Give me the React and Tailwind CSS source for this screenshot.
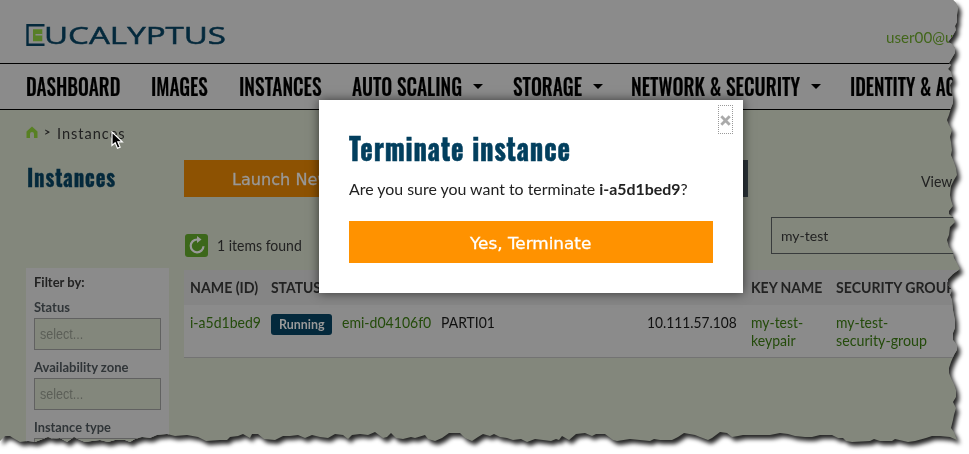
import { useLayoutEffect, useRef, useState } from "react";

const OSWALD = "font-['Oswald','Roboto',sans-serif]";

// Squeezes or stretches a line of text so that it fills the width of its box.
function Fit({ className = "", children }) {
  const box = useRef(null);
  const line = useRef(null);
  const [scale, setScale] = useState(1);
  useLayoutEffect(() => {
    setScale(box.current.clientWidth / line.current.offsetWidth);
  }, []);
  return (
    <span ref={box} className={`block shrink-0 text-left whitespace-nowrap ${className}`}>
      <span ref={line} className="inline-block origin-left align-top" style={{ transform: `scaleX(${scale})` }}>
        {children}
      </span>
    </span>
  );
}

// Outline of the torn page: right edge downwards, then bottom edge leftwards.
const TORN = [
  "0,0 953,0 956,3 958,8 957,15 957,22 955,26 956,30 952,37 948,42 952,44 955,48 955,53 952,58 949,63 951,65 948,69 951,72 953,80 950,85 951,92 953,97 953,103 951,108 949,115 947,120 949,125 952,130 950,137 951,142 952,150",
  "951,155 954,162 956,168 957,175 954,180 951,186 950,195 951,200 953,206 949,211 949,214 953,217 955,222 950,227 949,235 947,240 949,247 953,252 954,258 957,263 960,269 953,274 948,279 948,285 952,290 950,295 952,300",
  "953,310 955,320 955,328 953,333 953,340 957,345 957,350 954,355 951,362 949,368 949,373 951,378 954,384 956,390 956,397 953,402 956,408 954,415 953,420 951,428 954,432 957,440",
  "950,437 940,436 932,436 926,438 915,441 908,442 895,439 892,441 880,441 874,439 870,441 852,442 846,441 843,438 838,438 832,435 820,435 812,437 805,437 795,436 788,434 780,433 770,435 755,435 743,435 738,436 732,437 727,433 720,432 712,438 708,440 700,437 695,435 684,433 678,437 672,440 660,440 654,439 650,441",
  "640,440 630,439 617,441 613,440 605,434 596,434 592,436 585,433 576,434 569,440 562,436 559,440 556,439 551,441 543,440 535,439 527,442 521,439 513,440 507,438 500,437 494,434 490,436 483,434 478,437 472,441 465,438 460,433 449,433 442,438 435,441 428,439 425,435 415,438 411,437 403,439 396,438 391,433 387,437 383,438 375,432 368,435 360,434 352,435 348,439 343,435 335,434 328,438 320,437",
  "312,435 305,438 298,435 290,436 283,436 275,440 264,439 258,434 252,434 250,438 243,434 238,436 230,437 227,440 220,440 206,441 198,437 187,435 175,436 167,434 157,435 150,438 142,437 135,439 130,442 125,440 115,440 108,442 100,440 92,441 85,442 80,440 74,437 67,442 60,438 53,439 48,437 35,442 28,441 20,442 13,438 10,436 5,436 0,441",
].join(" ");
const CLIP = `polygon(${TORN.split(" ").map((p) => p.split(",").map((n) => n + "px").join(" ")).join(",")})`;

function Logo() {
  return (
    <svg width="201" height="40" viewBox="0 0 201 40" className="block">
      <path d="M18.500 9.200H1.500V28.800H18.500" fill="none" stroke="#04293c" strokeWidth="2.400" />
      <path d="M7 13.300h9.300v12H7z" fill="#587f27" />
      <path d="M9.500 18.700h7" stroke="#8b8b8b" strokeWidth="1.500" />
      <text x="18" y="28" textLength="182" lengthAdjust="spacingAndGlyphs" fontSize="24" fill="#04293c" stroke="#04293c" strokeWidth="0.500" className="font-['Open_Sans',sans-serif]">
        UCALYPTUS
      </text>
    </svg>
  );
}

function Caret() {
  return (
    <svg width="10" height="5" viewBox="0 0 10 5" className="shrink-0">
      <path d="M0 0h10L5 5z" fill="#000" />
    </svg>
  );
}

function NavItem({ width, gap, caret, children }) {
  return (
    <div className={`flex shrink-0 items-center ${gap}`}>
      <Fit className={`h-[44px] leading-[40px] ${width}`}>{children}</Fit>
      {caret && <span className="ml-[11px]"><Caret /></span>}
    </div>
  );
}

function Select({ label, width, className }) {
  return (
    <div className={className}>
      <Fit className={`${width} h-[18px] text-[14px] leading-[16px] font-bold text-[#303538]`}>{label}</Fit>
      <div className="mt-[1px] flex h-[32px] w-[127px] items-center border border-[#616161] bg-[#83877c] pl-[5px] font-['Liberation_Sans',sans-serif] text-[14px] leading-[18px] text-[#5c5f58]">
        <Fit className="w-[43px]">select...</Fit>
      </div>
    </div>
  );
}

function Page() {
  return (
    <div className="h-[454px] w-[969px] overflow-hidden bg-[#83877c] font-['Lato',sans-serif] text-[15px] text-[#222]" style={{ clipPath: CLIP }}>
      <header className="flex h-[63px] justify-between bg-[#8b8b8b] pl-[26px]">
        <div className="pt-[16px]"><Logo /></div>
        <Fit className="mr-[1px] w-[82px] pt-[28px] leading-[18px] text-[#42661a]">user00@ucc</Fit>
      </header>
      <nav className={`flex h-[47px] items-center border-y border-black bg-[#8b8b8b] pl-[26px] text-[24px] font-medium text-black [-webkit-text-stroke:0.2px_#000] ${OSWALD}`}>
        <NavItem width="w-[94px]" gap="mr-[31px]">DASHBOARD</NavItem>
        <NavItem width="w-[57px]" gap="mr-[31px]">IMAGES</NavItem>
        <NavItem width="w-[83px]" gap="mr-[30px]">INSTANCES</NavItem>
        <NavItem width="w-[110px]" gap="mr-[30px]" caret>AUTO SCALING</NavItem>
        <NavItem width="w-[69px]" gap="mr-[28px]" caret>STORAGE</NavItem>
        <NavItem width="w-[169px]" gap="mr-[29px]" caret>NETWORK &amp; SECURITY</NavItem>
        <NavItem width="w-[143px]" gap="">IDENTITY &amp; ACCESS</NavItem>
      </nav>
      <div className="flex h-[50px] items-start pt-[14px] pl-[26px] leading-[18px]">
        <svg width="12" height="13" viewBox="0 0 12 13" className="mt-[2px]">
          <path d="M6 0.500L11.500 5.500V12H8V8a2 2 0 0 0-4 0v4H0.500V5.500z" fill="#588023" />
        </svg>
        <span className="ml-[6px] w-[13px] text-[11px] leading-[16px] font-bold">&gt;</span>
        <Fit className="w-[69px] tracking-[1px]">Instances</Fit>
      </div>
      <div className="flex pl-[26px]">
        <aside className="w-[143px] shrink-0">
          <Fit className={`ml-[1px] h-[108px] w-[89px] text-[24px] leading-[33px] font-extrabold tracking-[1px] text-[#04293c] [-webkit-text-stroke:0.4px_#04293c] ${OSWALD}`}>Instances</Fit>
          <div className="h-[200px] bg-[#8b8b8b] pt-[6px] pl-[8px]">
            <Fit className="h-[18px] w-[51px] text-[14px] leading-[16px] font-bold">Filter by:</Fit>
            <Select className="mt-[7px]" width="w-[36px]" label="Status" />
            <Select className="mt-[9px]" width="w-[95px]" label="Availability zone" />
            <Select className="mt-[9px]" width="w-[77px]" label="Instance type" />
          </div>
        </aside>
        <main className="ml-[15px] w-[785px] shrink-0">
          <div className="flex h-[57px] items-start">
            <div className="h-[37px] w-[300px] bg-[#8d5202] pl-[48px] font-['DejaVu_Sans',sans-serif] text-[16px] leading-[39px] text-[#999] [-webkit-text-stroke:0.3px_#999]">
              <Fit className="w-[172px]">Launch New Instance</Fit>
            </div>
            <div className="ml-[14px] h-[37px] w-[250px] bg-[#2c3339]" />
            <Fit className="mt-[12px] ml-[173px] w-[31px] leading-[18px]">View</Fit>
          </div>
          <div className="flex h-[53px] items-start">
            <svg width="23" height="23" viewBox="0 0 23 23" className="mt-[17px] ml-[1px] shrink-0">
              <rect width="23" height="23" rx="3" fill="#3c671a" />
              <path d="M14 5.500H12a6.400 6.400 0 1 0 6.500 6.800" fill="none" stroke="#999" strokeWidth="2.200" />
              <path d="M12 2l4.500 3.500-4.500 3.500z" fill="#999" />
            </svg>
            <Fit className="mt-[19px] ml-[9px] w-[85px] leading-[18px]">1 items found</Fit>
            <div className="ml-[469px] h-[37px] w-[250px] shrink-0 border border-[#383b3c] pl-[9px] leading-[35px]">
              <Fit className="w-[47px] text-[14px]">my-test</Fit>
            </div>
          </div>
          <div className="grid h-[35px] grid-cols-[81px_480px_85px_1fr] bg-[#858585] pl-[6px] leading-[34px] font-bold">
            <Fit className="w-[68px]">NAME (ID)</Fit>
            <Fit className="w-[50px]">STATUS</Fit>
            <Fit className="w-[71px]">KEY NAME</Fit>
            <Fit className="w-[127px]">SECURITY GROUPS</Fit>
          </div>
          <div className="grid h-[53px] grid-cols-[81px_71px_99px_206px_104px_85px_1fr] border-b border-[#737373] bg-[#8b8b8b] pt-[8px] pl-[6px] leading-[18px] text-[#244b0b]">
            <Fit className="w-[71px]">i-a5d1bed9</Fit>
            <div className="mt-[1px] flex h-[21px] w-[61px] items-center rounded-[3px] bg-[#04293c] pl-[8px] text-[13px] font-bold text-[#999]">
              <Fit className="w-[46px] pb-[1px]">Running</Fit>
            </div>
            <Fit className="w-[89px]">emi-d04106f0</Fit>
            <Fit className="w-[54px] text-[#111]">PARTI01</Fit>
            <Fit className="w-[90px] text-[#111]">10.111.57.108</Fit>
            <div>
              <Fit className="w-[52px]">my-test-</Fit>
              <Fit className="w-[45px]">keypair</Fit>
            </div>
            <div>
              <Fit className="w-[52px]">my-test-</Fit>
              <Fit className="w-[91px]">security-group</Fit>
            </div>
          </div>
        </main>
      </div>
    </div>
  );
}

function Modal() {
  return (
    <div className="absolute top-[100px] left-[319px] h-[193px] w-[424px] bg-white px-[30px] font-['Lato',sans-serif] text-[#222] shadow-[0_0_10px_rgba(0,0,0,0.6)]">
      <button className="absolute top-[5px] right-[10px] flex h-[29px] w-[15px] items-center justify-center border border-dotted border-[#999]">
        <svg width="11" height="11" viewBox="0 0 11 11" className="mt-[2px] shrink-0">
          <path d="M1.300 1.300l8.400 8.400M9.700 1.300L1.300 9.700" stroke="#aaa" strokeWidth="2.800" />
        </svg>
      </button>
      <h2 className={`h-[79px] pt-[30px] text-[30px] leading-[36px] font-extrabold tracking-[1px] text-[#023f5e] [-webkit-text-stroke:0.6px_#023f5e] ${OSWALD}`}>
        <Fit className="w-[222px]">Terminate instance</Fit>
      </h2>
      <p className="h-[20px] leading-[20px]">
        <Fit className="w-[339px] text-[16px]">
          Are you sure you want to terminate <b>i-a5d1bed9</b>?
        </Fit>
      </p>
      <button className="mt-[22px] flex h-[42px] w-[364px] items-center bg-[#ff9200] pt-[3px] pl-[121px] font-['DejaVu_Sans',sans-serif] text-[16px] text-white [-webkit-text-stroke:0.3px_#fff]">
        <Fit className="w-[121px]">Yes, Terminate</Fit>
      </button>
    </div>
  );
}

export default function App() {
  return (
    <div className="relative h-[454px] w-[969px] overflow-hidden bg-white">
      <div className="drop-shadow-[3px_4px_2px_rgba(0,0,0,0.85)]">
        <Page />
      </div>
      <Modal />
      <svg width="13" height="19" viewBox="0 0 13 19" className="absolute top-[131px] left-[111px]">
        <path d="M1 1v13.500l3.200-2.800 2.300 5.500 2.600-1.100-2.300-5.300h4.500z" fill="#000" stroke="#fff" strokeWidth="1.200" />
      </svg>
    </div>
  );
}
